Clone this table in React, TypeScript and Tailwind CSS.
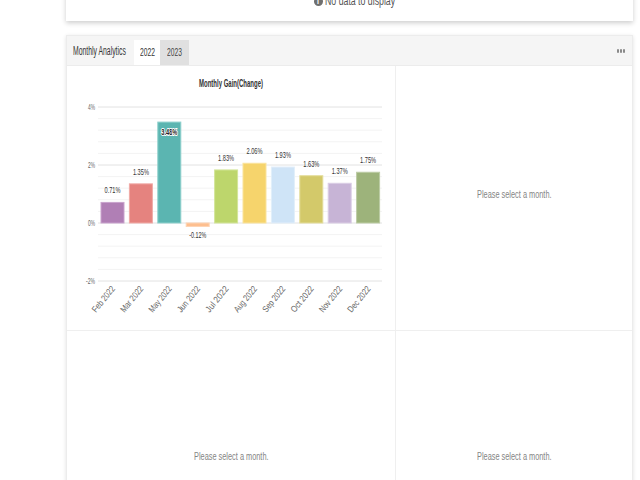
const font = '"Liberation Sans", Arial, sans-serif';

const bars = [
  { label: 'Feb 2022', value: 0.71, color: '#b07fb5', edge: '#c9a3cd' },
  { label: 'Mar 2022', value: 1.35, color: '#e5837f', edge: '#f0aaa7' },
  { label: 'May 2022', value: 3.48, color: '#5bb5b1', edge: '#8fd0cd' },
  { label: 'Jun 2022', value: -0.12, color: '#fdbf8f', edge: '#fed4b4' },
  { label: 'Jul 2022', value: 1.83, color: '#bdd66c', edge: '#d3e59a' },
  { label: 'Aug 2022', value: 2.06, color: '#f6d46c', edge: '#fae39c' },
  { label: 'Sep 2022', value: 1.93, color: '#cfe4f7', edge: '#e2effa' },
  { label: 'Oct 2022', value: 1.63, color: '#d3c96a', edge: '#e3dc9a' },
  { label: 'Nov 2022', value: 1.37, color: '#c7b4d6', edge: '#dacde5' },
  { label: 'Dec 2022', value: 1.75, color: '#9db37b', edge: '#bccca5' },
];

// the reference text is drawn in a very narrow face, so squeeze Liberation Sans sideways
function Squish({ box, inner, children }: { box: string; inner: string; children: React.ReactNode }) {
  return (
    <span className={`inline-block whitespace-nowrap ${box}`}>
      <span className={`inline-block ${inner}`}>{children}</span>
    </span>
  );
}

function GainChart() {
  const zero = 157;
  const perPct = 29;
  const left = 31;
  const right = 315;
  const slot = 28.4;
  const minor = [];
  for (let i = -5; i <= 10; i++) minor.push(zero - i * 11.6);

  return (
    <svg width="329" height="265" viewBox="0 0 329 265" style={{ fontFamily: font }}>
      <text
        x="164"
        y="21"
        textAnchor="middle"
        fontSize="10"
        fill="#333"
        fontWeight="600"
        textLength="64"
        lengthAdjust="spacingAndGlyphs"
      >
        Monthly Gain(Change)
      </text>
      {minor.map((y, i) => (
        <line key={i} x1={left} x2={right} y1={y} y2={y} stroke="#f3f3f3" strokeWidth="1" />
      ))}
      {[4, 2, 0, -2].map((v) => (
        <g key={v}>
          <line x1={left} x2={right} y1={zero - v * perPct} y2={zero - v * perPct} stroke="#e8e8e8" strokeWidth="1" />
          <text
            x={left - 3}
            y={zero - v * perPct + 3}
            textAnchor="end"
            fontSize="8.5"
            fill="#666"
            textLength={v < 0 ? 9 : 7}
            lengthAdjust="spacingAndGlyphs"
          >
            {v}%
          </text>
        </g>
      ))}
      {bars.map((b, i) => {
        const x = left + 3 + i * slot;
        const h = Math.abs(b.value) * perPct;
        const y = b.value >= 0 ? zero - h : zero;
        const cx = x + 11.5;
        const inside = b.value > 3;
        const ly = b.value < 0 ? zero + h + 12 : inside ? y + 13 : y - 9;
        return (
          <g key={b.label}>
            <rect x={x} y={y} width="23" height={h} fill={b.color} stroke={b.edge} strokeWidth="1" />
            <text
              x={cx}
              y={ly}
              textAnchor="middle"
              fontSize="9"
              fill={inside ? '#222' : '#333'}
              fontWeight={inside ? 700 : 400}
              stroke={inside ? '#fff' : 'none'}
              strokeWidth={inside ? 2 : 0}
              paintOrder="stroke"
              textLength={b.value < 0 ? 17 : 16}
              lengthAdjust="spacingAndGlyphs"
            >
              {b.value.toFixed(2)}%
            </text>
            <text
              x={cx + 3}
              y={zero + 66}
              textAnchor="end"
              fontSize="9"
              fill="#666"
              textLength="31"
              lengthAdjust="spacingAndGlyphs"
              transform={`rotate(-51 ${cx + 3} ${zero + 66})`}
            >
              {b.label}
            </text>
          </g>
        );
      })}
    </svg>
  );
}

function Empty() {
  return (
    <Squish box="w-[74px] text-[11px] leading-[14px] text-[#858585]" inner="origin-left scale-x-[0.67]">
      Please select a month.
    </Squish>
  );
}

export default function App() {
  return (
    <div className="w-[640px] h-[480px] overflow-hidden bg-white pl-[66px] pr-[7px]" style={{ fontFamily: font }}>
      <div className="-mt-[20px] h-[41px] bg-white shadow-[0_2px_5px_rgba(0,0,0,0.2)] flex items-end justify-center pb-[13px]">
        <div className="flex items-center gap-[2px] text-[12px] leading-[14px] text-[#555]">
          <span className="w-[9px] h-[9px] rounded-full bg-[#6f6f6f] text-white text-[7px] leading-[9px] font-bold flex items-center justify-center">
            i
          </span>
          <Squish box="w-[61px]" inner="origin-left scale-x-[0.73]">
            No data to display
          </Squish>
        </div>
      </div>

      <div className="mt-[14px] bg-white border border-[#ececec] shadow-[0_1px_4px_rgba(0,0,0,0.12)]">
        <div className="h-[30px] bg-[#f5f5f5] border-b border-[#ececec] flex items-end pr-[7px]">
          <div className="self-center w-[67px] pl-[6px] text-[12px] leading-[14px] text-[#333]">
            <Squish box="w-[53px]" inner="origin-left scale-x-[0.57]">
              Monthly Analytics
            </Squish>
          </div>
          <div className="h-[25px] w-[26px] bg-white flex items-center justify-center text-[11px] text-[#333]">
            <Squish box="w-[15px]" inner="origin-left scale-x-[0.61]">
              2022
            </Squish>
          </div>
          <div className="h-[25px] w-[29px] bg-[#e0e0e0] flex items-center justify-center text-[11px] text-[#444]">
            <Squish box="w-[15px]" inner="origin-left scale-x-[0.61]">
              2023
            </Squish>
          </div>
          <div className="ml-auto self-center flex gap-[1px] pt-[1px]">
            <span className="w-[2px] h-[4px] rounded-[1px] bg-[#8a8a8a]" />
            <span className="w-[2px] h-[4px] rounded-[1px] bg-[#8a8a8a]" />
            <span className="w-[2px] h-[4px] rounded-[1px] bg-[#8a8a8a]" />
          </div>
        </div>
        <div className="grid grid-cols-[329px_1fr]">
          <div className="h-[265px] border-r border-b border-[#efefef]">
            <GainChart />
          </div>
          <div className="h-[265px] border-b border-[#efefef] flex items-center justify-center pb-[8px]">
            <Empty />
          </div>
          <div className="h-[265px] border-r border-[#efefef] flex justify-center pt-[118px]">
            <Empty />
          </div>
          <div className="h-[265px] flex justify-center pt-[118px]">
            <Empty />
          </div>
        </div>
      </div>
    </div>
  );
}
